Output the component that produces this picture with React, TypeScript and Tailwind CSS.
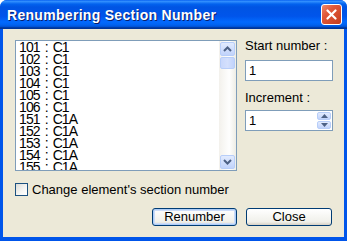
const items = [
  "101 : C1",
  "102 : C1",
  "103 : C1",
  "104 : C1",
  "105 : C1",
  "106 : C1",
  "151 : C1A",
  "152 : C1A",
  "153 : C1A",
  "154 : C1A",
  "155 : C1A",
];

function Chevron({ up }: { up?: boolean }) {
  return (
    <svg width="9" height="6" viewBox="0 0 9 6">
      <path
        d={up ? "M1 5 L4.5 1.5 L8 5" : "M1 1 L4.5 4.5 L8 1"}
        fill="none"
        stroke="#4d6185"
        strokeWidth={2}
      />
    </svg>
  );
}

function SmallArrow({ up }: { up?: boolean }) {
  return (
    <svg width="7" height="4" viewBox="0 0 7 4">
      <path d={up ? "M0 4 L3.5 0 L7 4 Z" : "M0 0 L3.5 4 L7 0 Z"} fill="#4d6185" />
    </svg>
  );
}

export default function App() {
  return (
    <div className="w-[347px] h-[241px] bg-white font-['Liberation_Sans',Arial,sans-serif]">
      <div className="w-full h-full flex flex-col rounded-t-[7px] bg-[#0055ea] overflow-hidden">
        {/* title bar */}
        <div className="h-[29px] shrink-0 flex items-center justify-between pl-[7px] pr-[5px] bg-[linear-gradient(180deg,#0058ee_0%,#3593ff_4%,#0262ee_14%,#0054e3_24%,#0055eb_56%,#026afe_76%,#0062ef_86%,#0052d6_92%,#0040ab_94%,#003092_100%)]">
          <span className="text-white font-bold text-[14px] tracking-[0.3px] [text-shadow:1px_1px_0_#0a1e6a] pt-[1px]">
            Renumbering Section Number
          </span>
          <div className="w-[21px] h-[21px] rounded-[3px] border border-white bg-[linear-gradient(135deg,#f08a6c_0%,#e0583a_35%,#c63c1c_100%)] flex items-center justify-center">
            <svg width="11" height="11" viewBox="0 0 11 11">
              <path d="M1.5 1.5 L9.5 9.5 M9.5 1.5 L1.5 9.5" stroke="white" strokeWidth={2.2} strokeLinecap="round" />
            </svg>
          </div>
        </div>

        {/* body */}
        <div className="flex-1 mx-[3px] mb-[4px] bg-[#ece9d8] pt-[11px] pl-[12px] flex flex-col">
          <div className="flex">
            {/* list box */}
            <div className="w-[222px] h-[131px] border border-[#7f9db9] bg-white flex">
              <div className="flex-1 overflow-hidden pl-[3px]">
                {items.map((t) => (
                  <div key={t} className="h-[12px] leading-[12px] text-[14px] text-black tracking-[-0.9px] [word-spacing:2px] whitespace-nowrap">
                    {t}
                  </div>
                ))}
              </div>
              <div className="w-[17px] flex flex-col bg-[linear-gradient(90deg,#f3f1ec_0%,#fefefe_60%,#eeede5_100%)] px-[1px] py-[1px]">
                <div className="h-[14px] rounded-[2px] border border-[#b8cef9] bg-[linear-gradient(180deg,#e2ebfe_0%,#c1d3fb_100%)] flex items-center justify-center">
                  <Chevron up />
                </div>
                <div className="h-[12px] mt-[1px] rounded-[2px] border border-[#b8cef9] bg-[linear-gradient(90deg,#c9d8fc_0%,#d4e0fd_50%,#c1d3fb_100%)]" />
                <div className="flex-1" />
                <div className="h-[14px] rounded-[2px] border border-[#b8cef9] bg-[linear-gradient(180deg,#e2ebfe_0%,#c1d3fb_100%)] flex items-center justify-center">
                  <Chevron />
                </div>
              </div>
            </div>

            {/* right column */}
            <div className="ml-[8px] w-[88px] flex flex-col text-[13px] text-black">
              <div className="h-[17px] leading-[17px] mt-[-3px]">Start number :</div>
              <div className="mt-[6px] h-[21px] border border-[#7f9db9] bg-white pl-[3px] leading-[19px]">1</div>
              <div className="mt-[8px] h-[17px] leading-[17px]">Increment :</div>
              <div className="mt-[4px] h-[21px] border border-[#7f9db9] bg-white pl-[3px] flex justify-between">
                <span className="leading-[19px]">1</span>
                <div className="w-[15px] flex flex-col py-[1px] pr-[1px] gap-[1px]">
                  <div className="flex-1 rounded-[2px] border border-[#b8cef9] bg-[linear-gradient(180deg,#e2ebfe_0%,#c1d3fb_100%)] flex items-center justify-center">
                    <SmallArrow up />
                  </div>
                  <div className="flex-1 rounded-[2px] border border-[#b8cef9] bg-[linear-gradient(180deg,#e2ebfe_0%,#c1d3fb_100%)] flex items-center justify-center">
                    <SmallArrow />
                  </div>
                </div>
              </div>
            </div>
          </div>

          {/* checkbox */}
          <div className="mt-[11px] flex items-center text-[13px] text-black">
            <div className="w-[13px] h-[13px] border border-[#1c5180] bg-[linear-gradient(135deg,#dcdcd7_0%,#f6f6f4_60%,#ffffff_100%)]" />
            <span className="ml-[4px] leading-[15px]">Change element's section number</span>
          </div>

          {/* buttons */}
          <div className="mt-[11px] flex gap-[9px] pl-[137px]">
            <div className="w-[85px] h-[18px] rounded-[3px] border border-[#003c74] bg-[linear-gradient(180deg,#ffffff_0%,#f0f0ea_80%,#d6d0c5_100%)] shadow-[inset_0_0_0_1px_#aecdf7,inset_0_0_0_2px_#ccdcf8] flex items-center justify-center text-[13px] text-black">
              Renumber
            </div>
            <div className="w-[86px] h-[18px] rounded-[3px] border border-[#003c74] bg-[linear-gradient(180deg,#ffffff_0%,#f0f0ea_80%,#d6d0c5_100%)] flex items-center justify-center text-[13px] text-black">
              Close
            </div>
          </div>
        </div>
      </div>
    </div>
  );
}
